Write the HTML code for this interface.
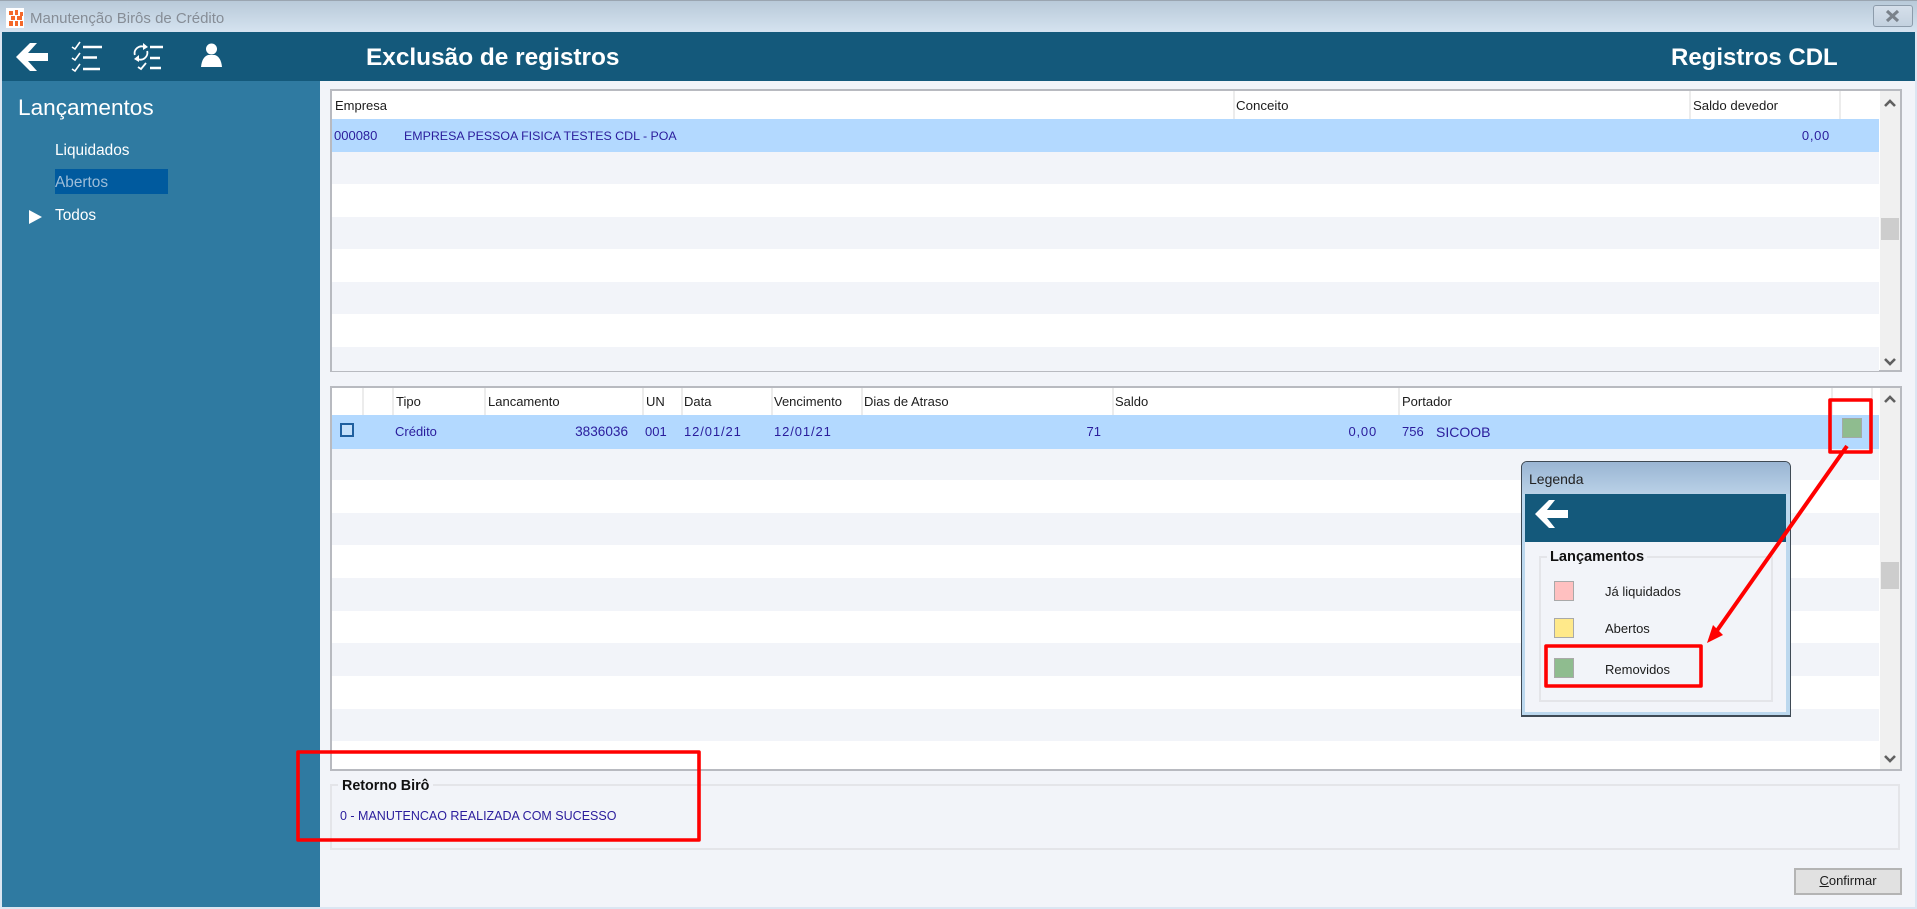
<!DOCTYPE html>
<html lang="pt-BR">
<head>
<meta charset="utf-8">
<title>Manutenção Birôs de Crédito</title>
<style>
html,body{margin:0;padding:0;width:1917px;height:909px;overflow:hidden;background:#dbe6f2;font-family:"Liberation Sans",sans-serif;}
body{filter:blur(.35px);}
*{box-sizing:border-box;}
.a{position:absolute;}
.t{position:absolute;white-space:nowrap;line-height:20px;height:20px;font-size:13px;color:#1c1c1c;}
.b{color:#2a1c9c;}
.r{text-align:right;}
</style>
</head>
<body>
<!-- title bar -->
<div class="a" style="left:0;top:0;width:1917px;height:32px;background:linear-gradient(#b9cad9,#d5e3f0);border-top:1px solid #9aa5b0;"></div>
<div class="a" style="left:6px;top:8px;width:18px;height:20px;background:#fff;"></div>
<div class="t" style="left:30px;top:9px;font-size:15px;color:#868d96;">Manutenção Birôs de Crédito</div>
<div class="a" style="left:1873px;top:5px;width:40px;height:22px;border:1px solid #8d9cab;border-radius:3px;background:linear-gradient(#d5dfea,#c3d1df);"></div>
<!-- main bg -->
<div class="a" style="left:2px;top:32px;width:1913px;height:875px;background:#f2f4f9;"></div>
<!-- header -->
<div class="a" style="left:2px;top:32px;width:1913px;height:49px;background:#14597b;"></div>
<div class="t" style="left:366px;top:48px;font-size:24.4px;font-weight:bold;color:#fff;">Exclusão de registros</div>
<div class="t" style="left:1671px;top:48px;font-size:24px;font-weight:bold;color:#fff;">Registros CDL</div>
<!-- sidebar -->
<div class="a" style="left:2px;top:81px;width:318px;height:826px;background:#2f7aa1;"></div>
<div class="t" style="left:18px;top:98px;font-size:22.6px;color:#fff;">Lançamentos</div>
<div class="t" style="left:55px;top:141px;font-size:15.4px;color:#fff;">Liquidados</div>
<div class="a" style="left:55px;top:169px;width:113px;height:25px;background:#005a9e;"></div>
<div class="t" style="left:55px;top:173px;font-size:15.4px;color:#9dbdd8;">Abertos</div>
<div class="t" style="left:55px;top:206px;font-size:15.4px;color:#fff;">Todos</div>

<!-- table 1 -->
<div class="a" style="left:330px;top:89px;width:1572px;height:283px;background:#fff;border:2px solid #b8bac0;"></div>
<div class="a" style="left:332px;top:119px;width:1547px;height:33px;background:#b3d9ff;"></div>
<div class="a" style="left:332px;top:152px;width:1547px;height:32px;background:#f2f4f9;"></div>
<div class="a" style="left:332px;top:217px;width:1547px;height:32px;background:#f2f4f9;"></div>
<div class="a" style="left:332px;top:282px;width:1547px;height:32px;background:#f2f4f9;"></div>
<div class="a" style="left:332px;top:347px;width:1547px;height:24px;background:#f2f4f9;"></div>
<div class="a" style="left:1233px;top:91px;width:2px;height:28px;background:#ececec;"></div>
<div class="a" style="left:1689px;top:91px;width:2px;height:28px;background:#ececec;"></div>
<div class="a" style="left:1839px;top:91px;width:2px;height:28px;background:#ececec;"></div>
<div class="a" style="left:1880px;top:91px;width:20px;height:279px;background:#f0f0f0;"></div>
<div class="a" style="left:1881px;top:218px;width:18px;height:22px;background:#cdcdcd;"></div>
<div class="t" style="left:335px;top:96px;">Empresa</div>
<div class="t" style="left:1236px;top:96px;font-size:13.3px;">Conceito</div>
<div class="t" style="left:1693px;top:96px;font-size:13.2px;">Saldo devedor</div>
<div class="t b" style="left:334px;top:126px;">000080</div>
<div class="t b" style="left:404px;top:126px;font-size:12.4px;">EMPRESA PESSOA FISICA TESTES CDL - POA</div>
<div class="t b r" style="left:1730px;width:100px;top:126px;letter-spacing:.7px;">0,00</div>

<!-- table 2 -->
<div class="a" style="left:330px;top:386px;width:1572px;height:385px;background:#fff;border:2px solid #b8bac0;"></div>
<div class="a" style="left:332px;top:415px;width:1547px;height:34px;background:#b3d9ff;"></div>
<div class="a" style="left:332px;top:449px;width:1547px;height:31px;background:#f2f4f9;"></div>
<div class="a" style="left:332px;top:513px;width:1547px;height:32px;background:#f2f4f9;"></div>
<div class="a" style="left:332px;top:578px;width:1547px;height:33px;background:#f2f4f9;"></div>
<div class="a" style="left:332px;top:643px;width:1547px;height:33px;background:#f2f4f9;"></div>
<div class="a" style="left:332px;top:709px;width:1547px;height:32px;background:#f2f4f9;"></div>
<div class="a" style="left:362px;top:388px;width:2px;height:27px;background:#ececec;"></div>
<div class="a" style="left:392px;top:388px;width:2px;height:27px;background:#ececec;"></div>
<div class="a" style="left:484px;top:388px;width:2px;height:27px;background:#ececec;"></div>
<div class="a" style="left:642px;top:388px;width:2px;height:27px;background:#ececec;"></div>
<div class="a" style="left:681px;top:388px;width:2px;height:27px;background:#ececec;"></div>
<div class="a" style="left:771px;top:388px;width:2px;height:27px;background:#ececec;"></div>
<div class="a" style="left:861px;top:388px;width:2px;height:27px;background:#ececec;"></div>
<div class="a" style="left:1112px;top:388px;width:2px;height:27px;background:#ececec;"></div>
<div class="a" style="left:1398px;top:388px;width:2px;height:27px;background:#ececec;"></div>
<div class="a" style="left:1831px;top:388px;width:2px;height:27px;background:#ececec;"></div>
<div class="a" style="left:1871px;top:388px;width:2px;height:27px;background:#ececec;"></div>
<div class="a" style="left:1880px;top:388px;width:20px;height:381px;background:#f0f0f0;"></div>
<div class="a" style="left:1881px;top:562px;width:18px;height:27px;background:#cdcdcd;"></div>
<div class="t" style="left:396px;top:392px;">Tipo</div>
<div class="t" style="left:488px;top:392px;">Lancamento</div>
<div class="t" style="left:646px;top:392px;">UN</div>
<div class="t" style="left:684px;top:392px;">Data</div>
<div class="t" style="left:774px;top:392px;">Vencimento</div>
<div class="t" style="left:864px;top:392px;">Dias de Atraso</div>
<div class="t" style="left:1115px;top:392px;">Saldo</div>
<div class="t" style="left:1402px;top:392px;">Portador</div>
<div class="a" style="left:340px;top:423px;width:14px;height:14px;border:2px solid #1f5f9f;background:#c4e0fb;"></div>
<div class="t b" style="left:395px;top:422px;">Crédito</div>
<div class="t b r" style="left:528px;width:100px;top:422px;font-size:13.6px;">3836036</div>
<div class="t b" style="left:645px;top:422px;">001</div>
<div class="t b" style="left:684px;top:422px;letter-spacing:.9px;">12/01/21</div>
<div class="t b" style="left:774px;top:422px;letter-spacing:.9px;">12/01/21</div>
<div class="t b r" style="left:1001px;width:100px;top:422px;">71</div>
<div class="t b r" style="left:1277px;width:100px;top:422px;letter-spacing:.8px;">0,00</div>
<div class="t b" style="left:1402px;top:422px;">756</div>
<div class="t b" style="left:1436px;top:422px;font-size:14px;">SICOOB</div>
<div class="a" style="left:1842px;top:418px;width:20px;height:20px;background:#8fbc8f;border:1px solid #a3a9a6;"></div>

<!-- retorno group -->
<div class="a" style="left:330px;top:784px;width:1570px;height:66px;border:2px solid #e4e5e9;"></div>
<div class="t" style="left:338px;top:776px;padding:0 4px;background:#f2f4f9;font-size:14.3px;font-weight:bold;color:#111;">Retorno Birô</div>
<div class="t b" style="left:340px;top:806px;font-size:12.5px;">0 - MANUTENCAO REALIZADA COM SUCESSO</div>

<!-- confirm button -->
<div class="a" style="left:1794px;top:868px;width:108px;height:27px;background:#e1e1e1;border:2px solid #b4b4b4;"></div>
<div class="t" style="left:1794px;width:108px;text-align:center;top:871px;"><u>C</u>onfirmar</div>

<!-- legend window -->
<div class="a" style="left:1521px;top:461px;width:270px;height:256px;background:#bcd8ee;border:1px solid #3f4a55;border-bottom-width:2px;border-radius:6px 6px 0 0;"></div>
<div class="a" style="left:1522px;top:462px;width:268px;height:32px;background:linear-gradient(#9ab5d3,#b9d1e7);border-radius:5px 5px 0 0;"></div>
<div class="t" style="left:1529px;top:469px;font-size:14px;color:#222;">Legenda</div>
<div class="a" style="left:1525px;top:494px;width:261px;height:218px;background:#f2f4f9;"></div>
<div class="a" style="left:1525px;top:494px;width:261px;height:48px;background:#14597b;"></div>
<div class="a" style="left:1539px;top:556px;width:234px;height:146px;border:2px solid #e4e5e9;"></div>
<div class="t" style="left:1547px;top:547px;padding:0 3px;background:#f2f4f9;font-size:14.6px;font-weight:bold;color:#111;">Lançamentos</div>
<div class="a" style="left:1554px;top:581px;width:20px;height:20px;background:#ffc0c0;border:1px solid #a9a9a9;"></div>
<div class="a" style="left:1554px;top:618px;width:20px;height:20px;background:#ffe98a;border:1px solid #a9a9a9;"></div>
<div class="a" style="left:1554px;top:658px;width:20px;height:20px;background:#8fbc8f;border:1px solid #a9a9a9;"></div>
<div class="t" style="left:1605px;top:582px;">Já liquidados</div>
<div class="t" style="left:1605px;top:619px;">Abertos</div>
<div class="t" style="left:1605px;top:660px;">Removidos</div>

<!-- svg icons and annotations -->
<svg class="a" style="left:0;top:0;" width="1917" height="909" viewBox="0 0 1917 909" fill="none">
  <!-- app icon -->
  <g fill="#f4682a">
    <rect x="9" y="11" width="4" height="4"/><rect x="15" y="10" width="3" height="5"/><rect x="20" y="12" width="3" height="4"/>
    <rect x="11" y="16" width="4" height="4"/><rect x="17" y="16" width="5" height="4"/>
    <rect x="9" y="21" width="4" height="5"/><rect x="15" y="21" width="3" height="5"/><rect x="20" y="21" width="3" height="5"/>
  </g>
  <!-- close -->
  <path d="M1887 11l11 10M1898 11l-11 10" stroke="#7a828b" stroke-width="3.200"/>
  <!-- back arrow -->
  <path d="M16 57L30 43h7L28 53H48V61H28L37 71H30Z" fill="#fff"/>
  <!-- checklist icon -->
  <g stroke="#fff" stroke-width="2.4">
    <path d="M83 47H102M83 57.500H97M83 69H100"/>
    <g stroke-width="1.6">
      <path d="M72 47l3 2 5-7M72 58l3 2 5-7M72 69l3 2 5-7"/>
    </g>
  </g>
  <!-- sync checklist icon -->
  <g stroke="#fff" stroke-width="2.4">
    <path d="M150 47H163M150 58H160M150 68H161"/>
    <g stroke-width="1.8">
      <path d="M134.800 55a7 7 0 0 1 9.700-8M147.200 51a7 7 0 0 1-9.700 8"/>
      <path d="M138 67l3 2 5-6"/>
    </g>
  </g>
  <path d="M143 43l5 4-5 3ZM139 55l-5 4 5 3Z" fill="#fff"/>
  <!-- person -->
  <circle cx="211.500" cy="49" r="5.500" fill="#fff"/>
  <path d="M201 67Q202 57 208 55H215Q221 57 222 67Z" fill="#fff"/>
  <!-- sidebar triangle -->
  <path d="M29 210L42 217L29 224Z" fill="#fff"/>
  <!-- scroll arrows -->
  <g stroke="#606060" stroke-width="2.600">
    <path d="M1885 106l5-5 5 5M1885 359l5 5 5-5" />
    <path d="M1885 402l5-5 5 5M1885 756l5 5 5-5" />
  </g>
  <!-- legend back arrow -->
  <path d="M1535 514L1549 500h6L1547 510H1568V518H1547L1555 528H1549Z" fill="#fff"/>
  <!-- red annotations -->
  <g stroke="#ff0000" stroke-width="3.600" stroke-linejoin="round">
    <rect x="1830" y="400" width="41" height="52"/>
    <rect x="1546" y="646" width="155" height="40"/>
    <rect x="298" y="752" width="401" height="88"/>
    <path d="M1847 446L1716 632" stroke-width="4"/>
  </g>
  <path d="M1707 643L1713 625L1723 635Z" fill="#ff0000"/>
</svg>
</body>
</html>
